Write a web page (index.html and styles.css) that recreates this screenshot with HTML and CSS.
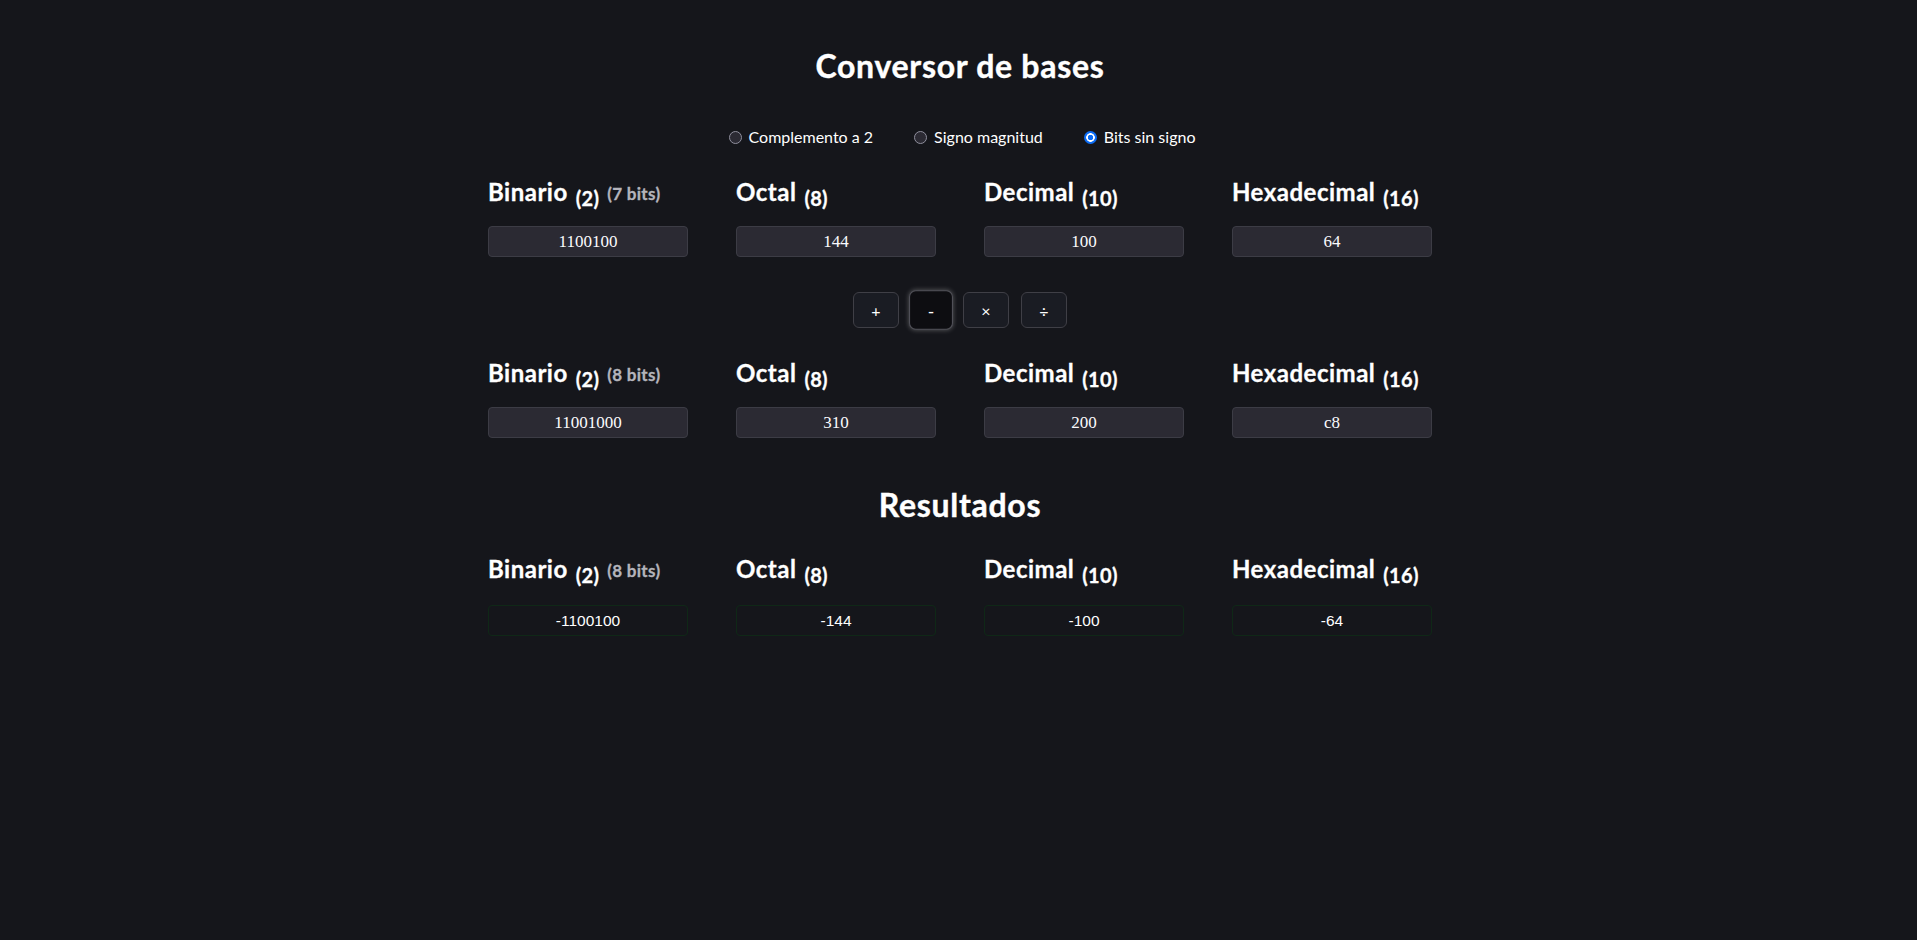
FILE: index.html
```html
<!DOCTYPE html>
<html lang="es">
<head>
<meta charset="utf-8">
<title>Conversor de bases</title>
<link rel="stylesheet" href="styles.css">
</head>
<body>
<div class="page">
  <h1 class="title">Conversor de bases</h1>
  <div class="modes">
    <label class="mode"><input class="radio" type="radio" name="mode">Complemento a 2</label>
    <label class="mode"><input class="radio" type="radio" name="mode">Signo magnitud</label>
    <label class="mode"><input class="radio" type="radio" name="mode" checked>Bits sin signo</label>
  </div>

  <div class="grid first">
    <div class="field">
      <div class="label">Binario<span class="base">(2)</span><span class="bits">(7 bits)</span></div>
      <input class="num" value="1100100">
    </div>
    <div class="field">
      <div class="label">Octal<span class="base">(8)</span></div>
      <input class="num" value="144">
    </div>
    <div class="field">
      <div class="label">Decimal<span class="base">(10)</span></div>
      <input class="num" value="100">
    </div>
    <div class="field">
      <div class="label">Hexadecimal<span class="base">(16)</span></div>
      <input class="num" value="64">
    </div>
  </div>

  <div class="ops">
    <button class="op">+</button>
    <button class="op active">-</button>
    <button class="op">×</button>
    <button class="op">÷</button>
  </div>

  <div class="grid second">
    <div class="field">
      <div class="label">Binario<span class="base">(2)</span><span class="bits">(8 bits)</span></div>
      <input class="num" value="11001000">
    </div>
    <div class="field">
      <div class="label">Octal<span class="base">(8)</span></div>
      <input class="num" value="310">
    </div>
    <div class="field">
      <div class="label">Decimal<span class="base">(10)</span></div>
      <input class="num" value="200">
    </div>
    <div class="field">
      <div class="label">Hexadecimal<span class="base">(16)</span></div>
      <input class="num" value="c8">
    </div>
  </div>

  <h2 class="title results-title">Resultados</h2>

  <div class="grid third">
    <div class="field results">
      <div class="label">Binario<span class="base">(2)</span><span class="bits">(8 bits)</span></div>
      <div class="out">-1100100</div>
    </div>
    <div class="field results">
      <div class="label">Octal<span class="base">(8)</span></div>
      <div class="out">-144</div>
    </div>
    <div class="field results">
      <div class="label">Decimal<span class="base">(10)</span></div>
      <div class="out">-100</div>
    </div>
    <div class="field results">
      <div class="label">Hexadecimal<span class="base">(16)</span></div>
      <div class="out">-64</div>
    </div>
  </div>
</div>
</body>
</html>
```

FILE: styles.css
```css
* {
  box-sizing: border-box;
}

html,
body {
  margin: 0;
}

body {
  background: #15161b;
  color: #ffffff;
  font-family: Lato, "Open Sans", sans-serif;
  padding-left: 3px;
  min-height: 940px;
}

.page {
  display: flex;
  flex-direction: column;
  align-items: center;
  padding-top: 46px;
}

.title {
  margin: 0;
  font-size: 32px;
  line-height: 40px;
  font-weight: 700;
  letter-spacing: 0.7px;
  -webkit-text-stroke: 0.4px #ffffff;
}

.modes {
  display: flex;
  gap: 41px;
  margin-top: 41px;
  margin-left: 4px;
  height: 20px;
  align-items: center;
}

.mode {
  display: flex;
  align-items: center;
  gap: 7px;
  font-size: 16px;
  line-height: 20px;
}

.radio {
  appearance: none;
  -webkit-appearance: none;
  margin: 0;
  width: 13px;
  height: 13px;
  border-radius: 50%;
  background: #2b2a33;
  border: 1px solid #8f8f9d;
}

.radio:checked {
  border: none;
  background: radial-gradient(circle, #0b6cf5 0 2.5px, #ffffff 3px 4px, #0b6cf5 4.6px);
}

.grid {
  display: grid;
  grid-template-columns: repeat(4, 200px);
  column-gap: 48px;
}

.grid.first {
  margin-top: 30px;
}

.grid.second {
  margin-top: 30px;
}

.grid.third {
  margin-top: 29px;
}

.results-title {
  margin-top: 47px;
}

.field {
  display: flex;
  flex-direction: column;
  gap: 19px;
}

.field.results {
  gap: 21px;
}

.label {
  height: 30px;
  line-height: 30px;
  font-size: 24px;
  font-weight: 700;
  letter-spacing: 0.5px;
  white-space: nowrap;
  -webkit-text-stroke: 0.3px #ffffff;
}

.base {
  font-size: 20px;
  line-height: 1;
  margin-left: 8px;
  letter-spacing: 0.3px;
  vertical-align: -5px;
}

.bits {
  font-size: 17px;
  line-height: 1;
  margin-left: 8px;
  letter-spacing: 0.3px;
  color: #b4b4bb;
  -webkit-text-stroke: 0.3px #b4b4bb;
  vertical-align: 1px;
}

.num {
  height: 31px;
  width: 200px;
  margin: 0;
  padding: 0;
  background: #2b2a33;
  border: 1px solid #3c3c45;
  border-radius: 4px;
  color: #fbfbfe;
  font: 17px "Liberation Serif", serif;
  text-align: center;
  outline: none;
}

.ops {
  display: flex;
  gap: 12px;
  margin-top: 35px;
}

.op {
  height: 36px;
  width: 46px;
  padding: 0;
  margin: 0;
  border: 1px solid #3f3f46;
  border-radius: 6px;
  background: #1a1c23;
  color: #ffffff;
  font: 16px Lato, sans-serif;
}

.op.active {
  width: 40px;
  transform: scale(1.1);
  background: #0d0d11;
  border-color: #505058;
  box-shadow: 0 0 5px rgba(255, 255, 255, 0.3);
}

.out {
  height: 31px;
  border: 1px solid #0f2817;
  border-radius: 4px;
  display: flex;
  align-items: center;
  justify-content: center;
  font: 15.5px "Liberation Sans", Arial, sans-serif;
  color: #ffffff;
}
```
